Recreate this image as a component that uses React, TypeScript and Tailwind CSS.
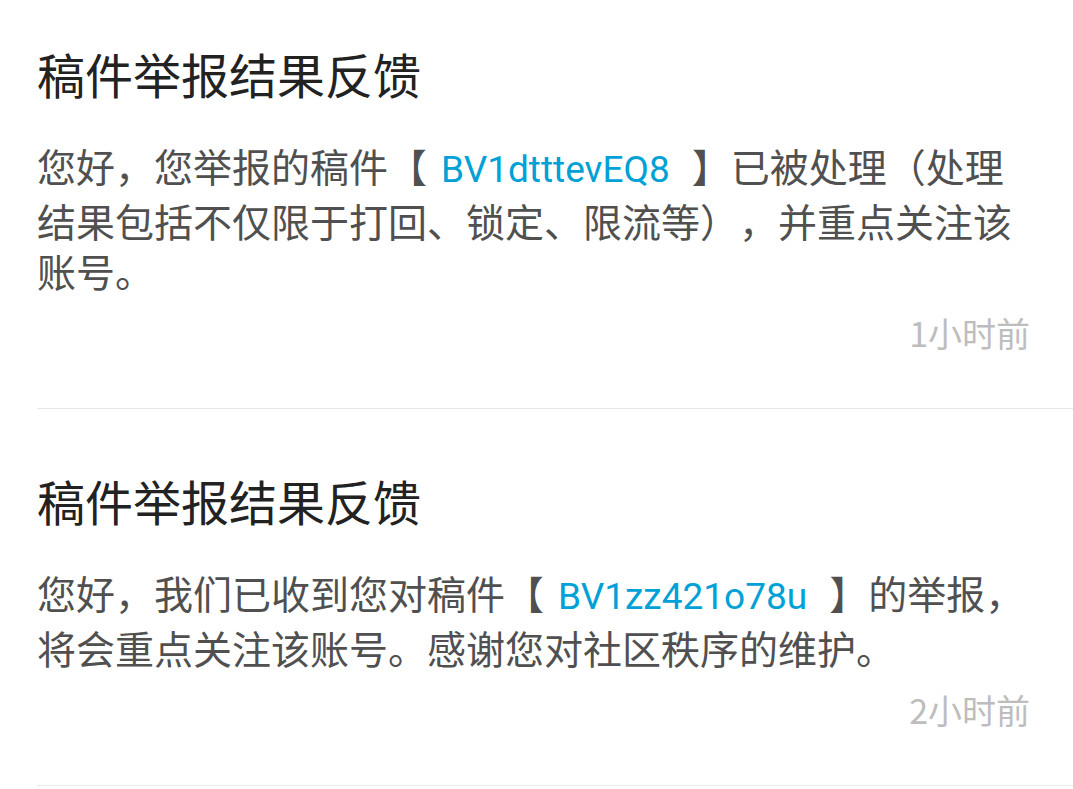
const cjk = { fontFamily: '"Noto Sans CJK SC", "Noto Sans", sans-serif' }
const latin = { fontFamily: 'Roboto, "Noto Sans CJK SC", sans-serif' }

type Notice = {
  title: string
  before: string
  bvid: string
  after: string
  time: string
}

const notices: Notice[] = [
  {
    title: "稿件举报结果反馈",
    before: "您好，您举报的稿件【",
    bvid: "BV1dtttevEQ8",
    after: "】已被处理（处理结果包括不仅限于打回、锁定、限流等），并重点关注该账号。",
    time: "1小时前",
  },
  {
    title: "稿件举报结果反馈",
    before: "您好，我们已收到您对稿件【",
    bvid: "BV1zz421o78u",
    after: "】的举报，将会重点关注该账号。感谢您对社区秩序的维护。",
    time: "2小时前",
  },
]

function NoticeItem({ n, first }: { n: Notice; first?: boolean }) {
  return (
    <div
      className={`ml-[37px] pr-[37px] border-b border-[#e8e8e8] pb-[55px] ${first ? "pt-[39px]" : "pt-[57px]"}`}
    >
      <h2 className="text-[48px] leading-[68px] text-[#222222] font-normal">{n.title}</h2>
      <p className="mt-[33px] text-[39px] leading-[50px] text-[#505050] [text-spacing-trim:space-all]">
        {n.before}
        <span className="text-[#00a1d6] text-[37px] pl-[14px] pr-[22px]" style={latin}>
          {n.bvid}
        </span>
        {n.after}
      </p>
      <div className="mt-[18px] flex justify-end pr-[6px]">
        <span className="text-[34px] leading-[40px] text-[#bdbdbd]">{n.time}</span>
      </div>
    </div>
  )
}

export default function App() {
  return (
    <div className="w-[1073px] h-[789px] overflow-hidden bg-white" style={cjk}>
      {notices.map((n, i) => (
        <NoticeItem key={i} n={n} first={i === 0} />
      ))}
    </div>
  )
}
